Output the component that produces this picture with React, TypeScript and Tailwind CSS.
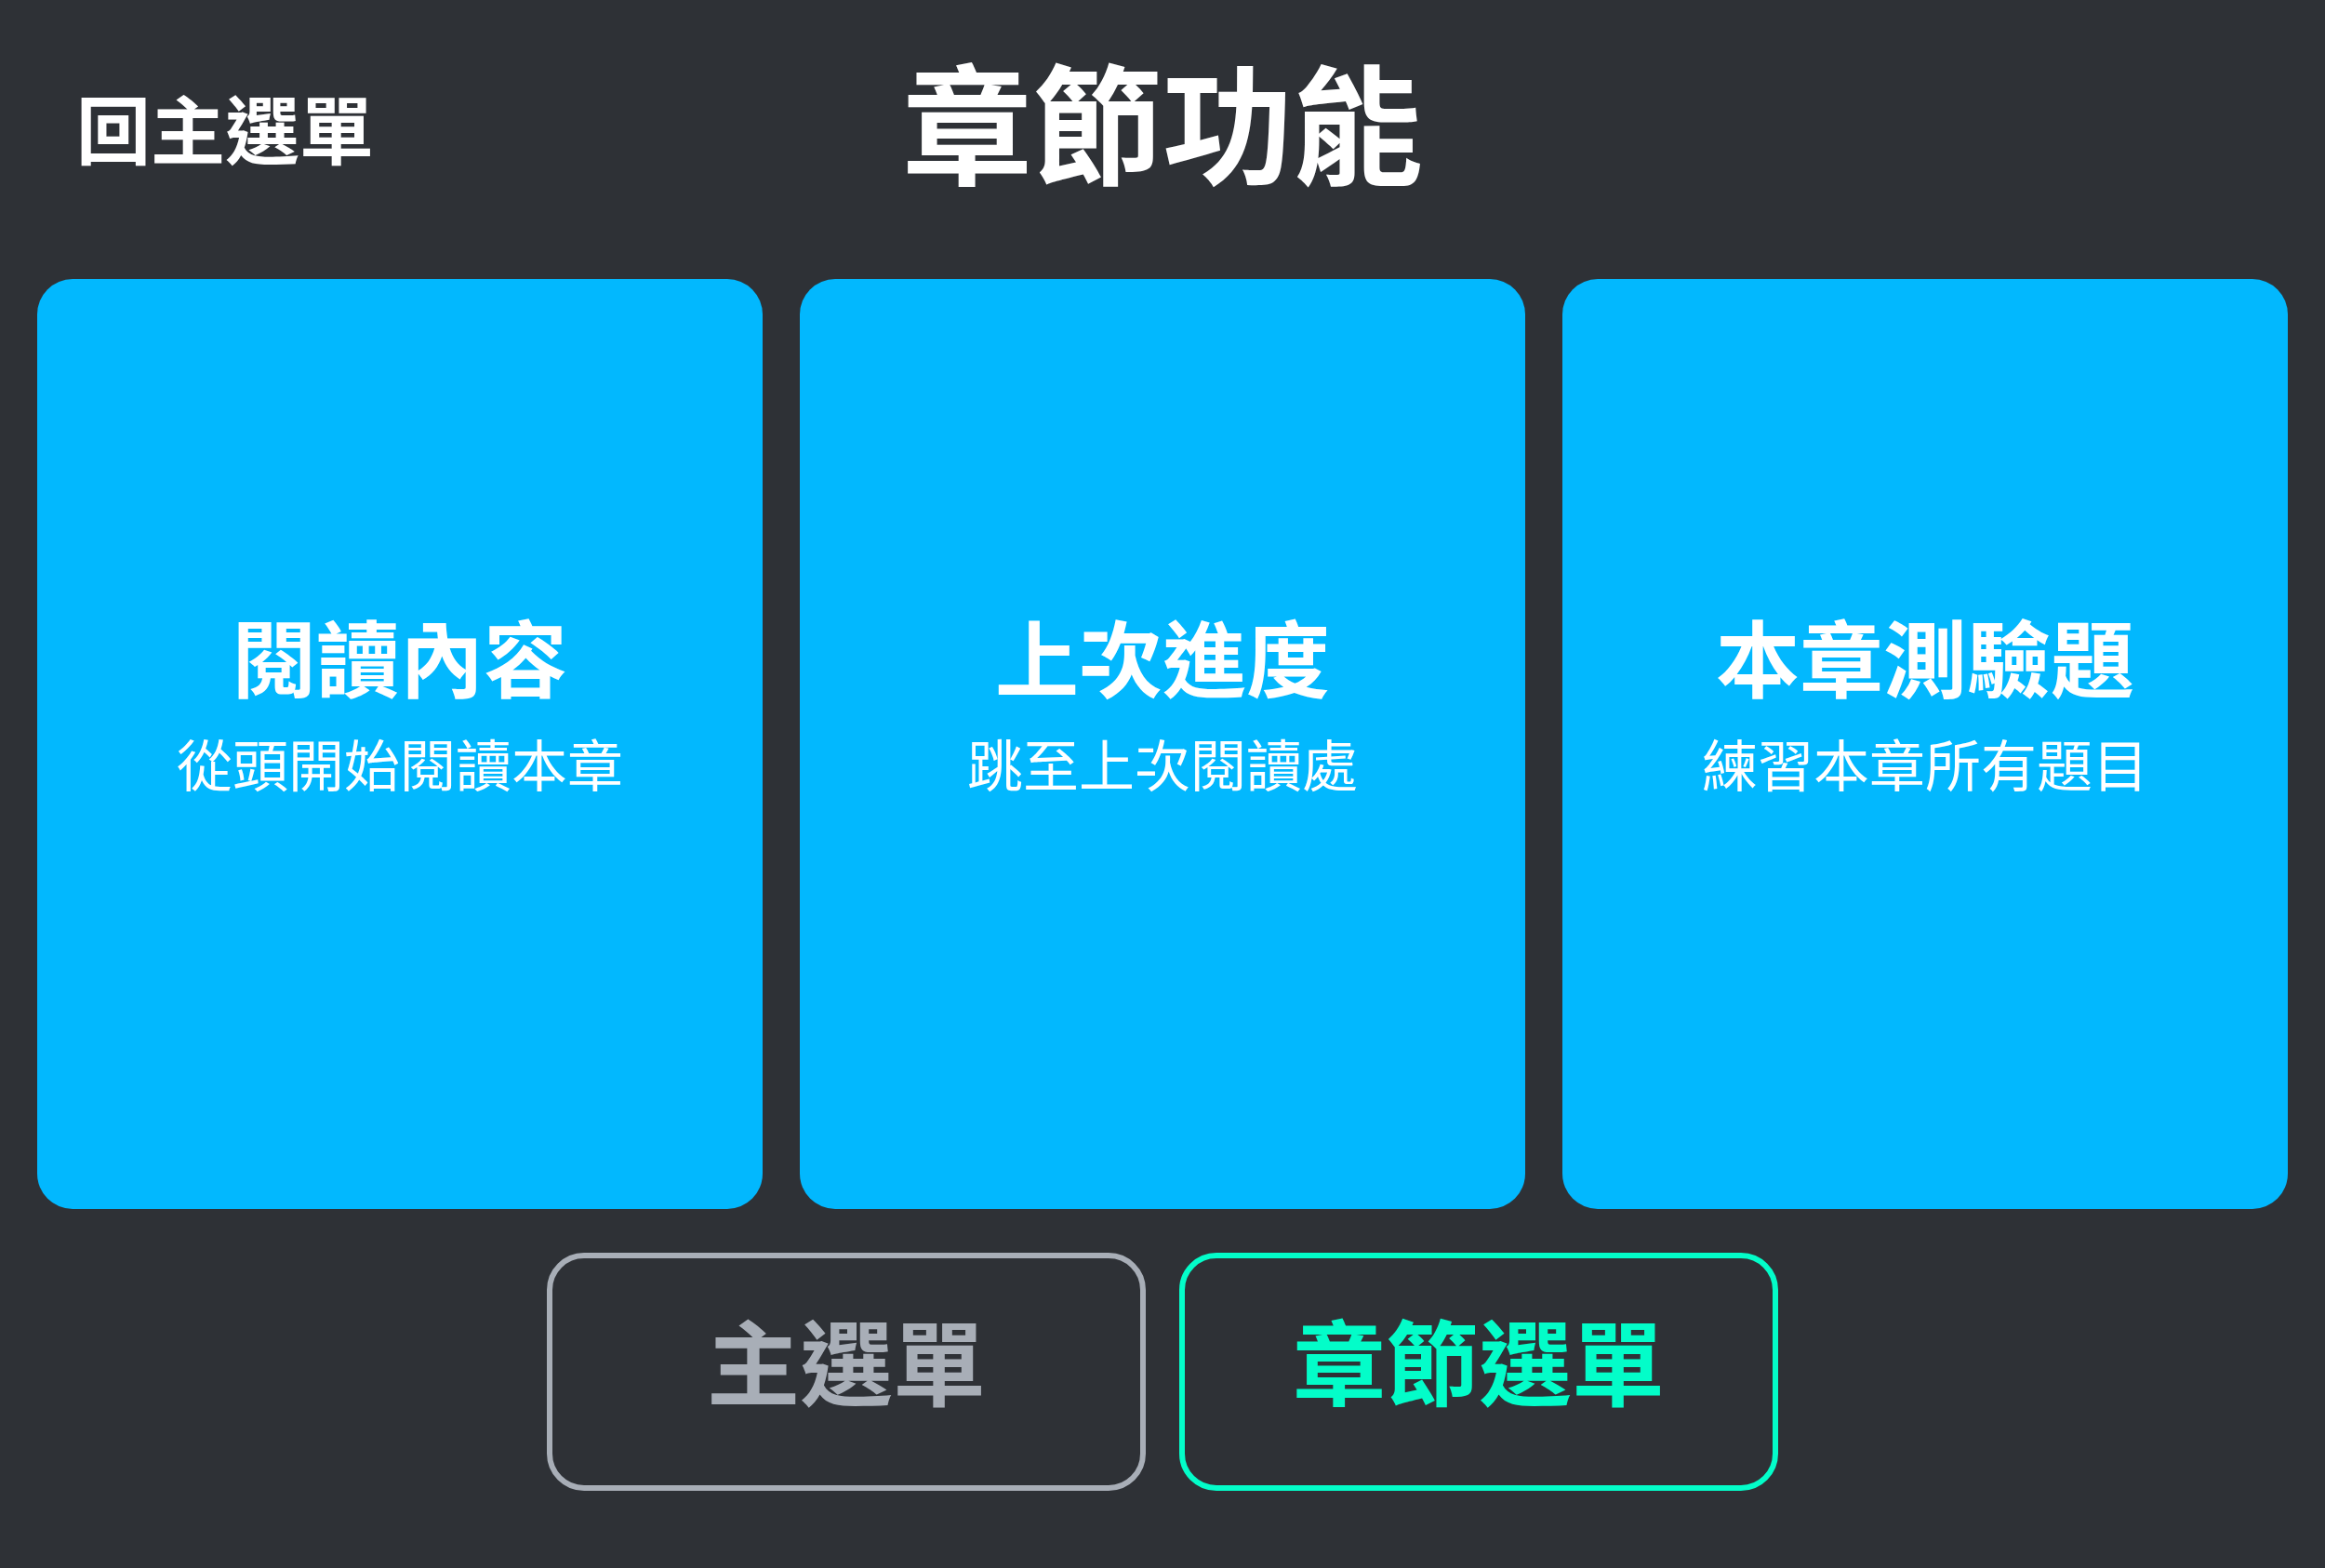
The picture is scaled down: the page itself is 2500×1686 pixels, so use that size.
import React from 'react';

type Action = {
  title: string;
  subtitle: string;
};

const actions: Action[] = [
  { title: '閱讀內容', subtitle: '從頭開始閱讀本章' },
  { title: '上次進度', subtitle: '跳至上次閱讀處' },
  { title: '本章測驗題', subtitle: '練習本章所有題目' },
];

const ActionCard: React.FC<{ action: Action }> = ({ action }) => (
  <button className="flex flex-col items-center justify-center rounded-[38px] bg-[#02b8fe] pb-[94px] text-white">
    <span className="text-[90px] font-bold leading-[1.2]">{action.title}</span>
    <span className="mt-[26px] text-[60px] font-normal leading-[1.2]">{action.subtitle}</span>
  </button>
);

export default function App() {
  return (
    <div className="flex min-h-screen w-full flex-col bg-[#2e3136] px-[40px] font-['Noto_Sans_CJK_TC','Noto_Sans_CJK_SC',sans-serif]">
      <header className="grid h-[300px] grid-cols-[1fr_auto_1fr] items-start">
        <button className="mt-[95px] justify-self-start pl-[42px] text-[80px] font-bold leading-none text-white">
          回主選單
        </button>
        <h1 className="mt-[57px] text-[140px] font-bold leading-none text-white">章節功能</h1>
        <div />
      </header>

      <div className="grid h-[1000px] grid-cols-3 gap-[40px]">
        {actions.map((a) => (
          <ActionCard key={a.title} action={a} />
        ))}
      </div>

      <div className="mt-[47px] flex justify-center gap-[36px]">
        <button className="flex h-[256px] w-[644px] items-center justify-center rounded-[40px] border-[6px] border-[#a8aeb7] pb-[28px] text-[100px] font-bold leading-none text-[#a8aeb7]">
          主選單
        </button>
        <button className="flex h-[256px] w-[644px] items-center justify-center rounded-[40px] border-[6px] border-[#03fdc9] pb-[28px] text-[100px] font-bold leading-none text-[#03fdc9]">
          章節選單
        </button>
      </div>
    </div>
  );
}
